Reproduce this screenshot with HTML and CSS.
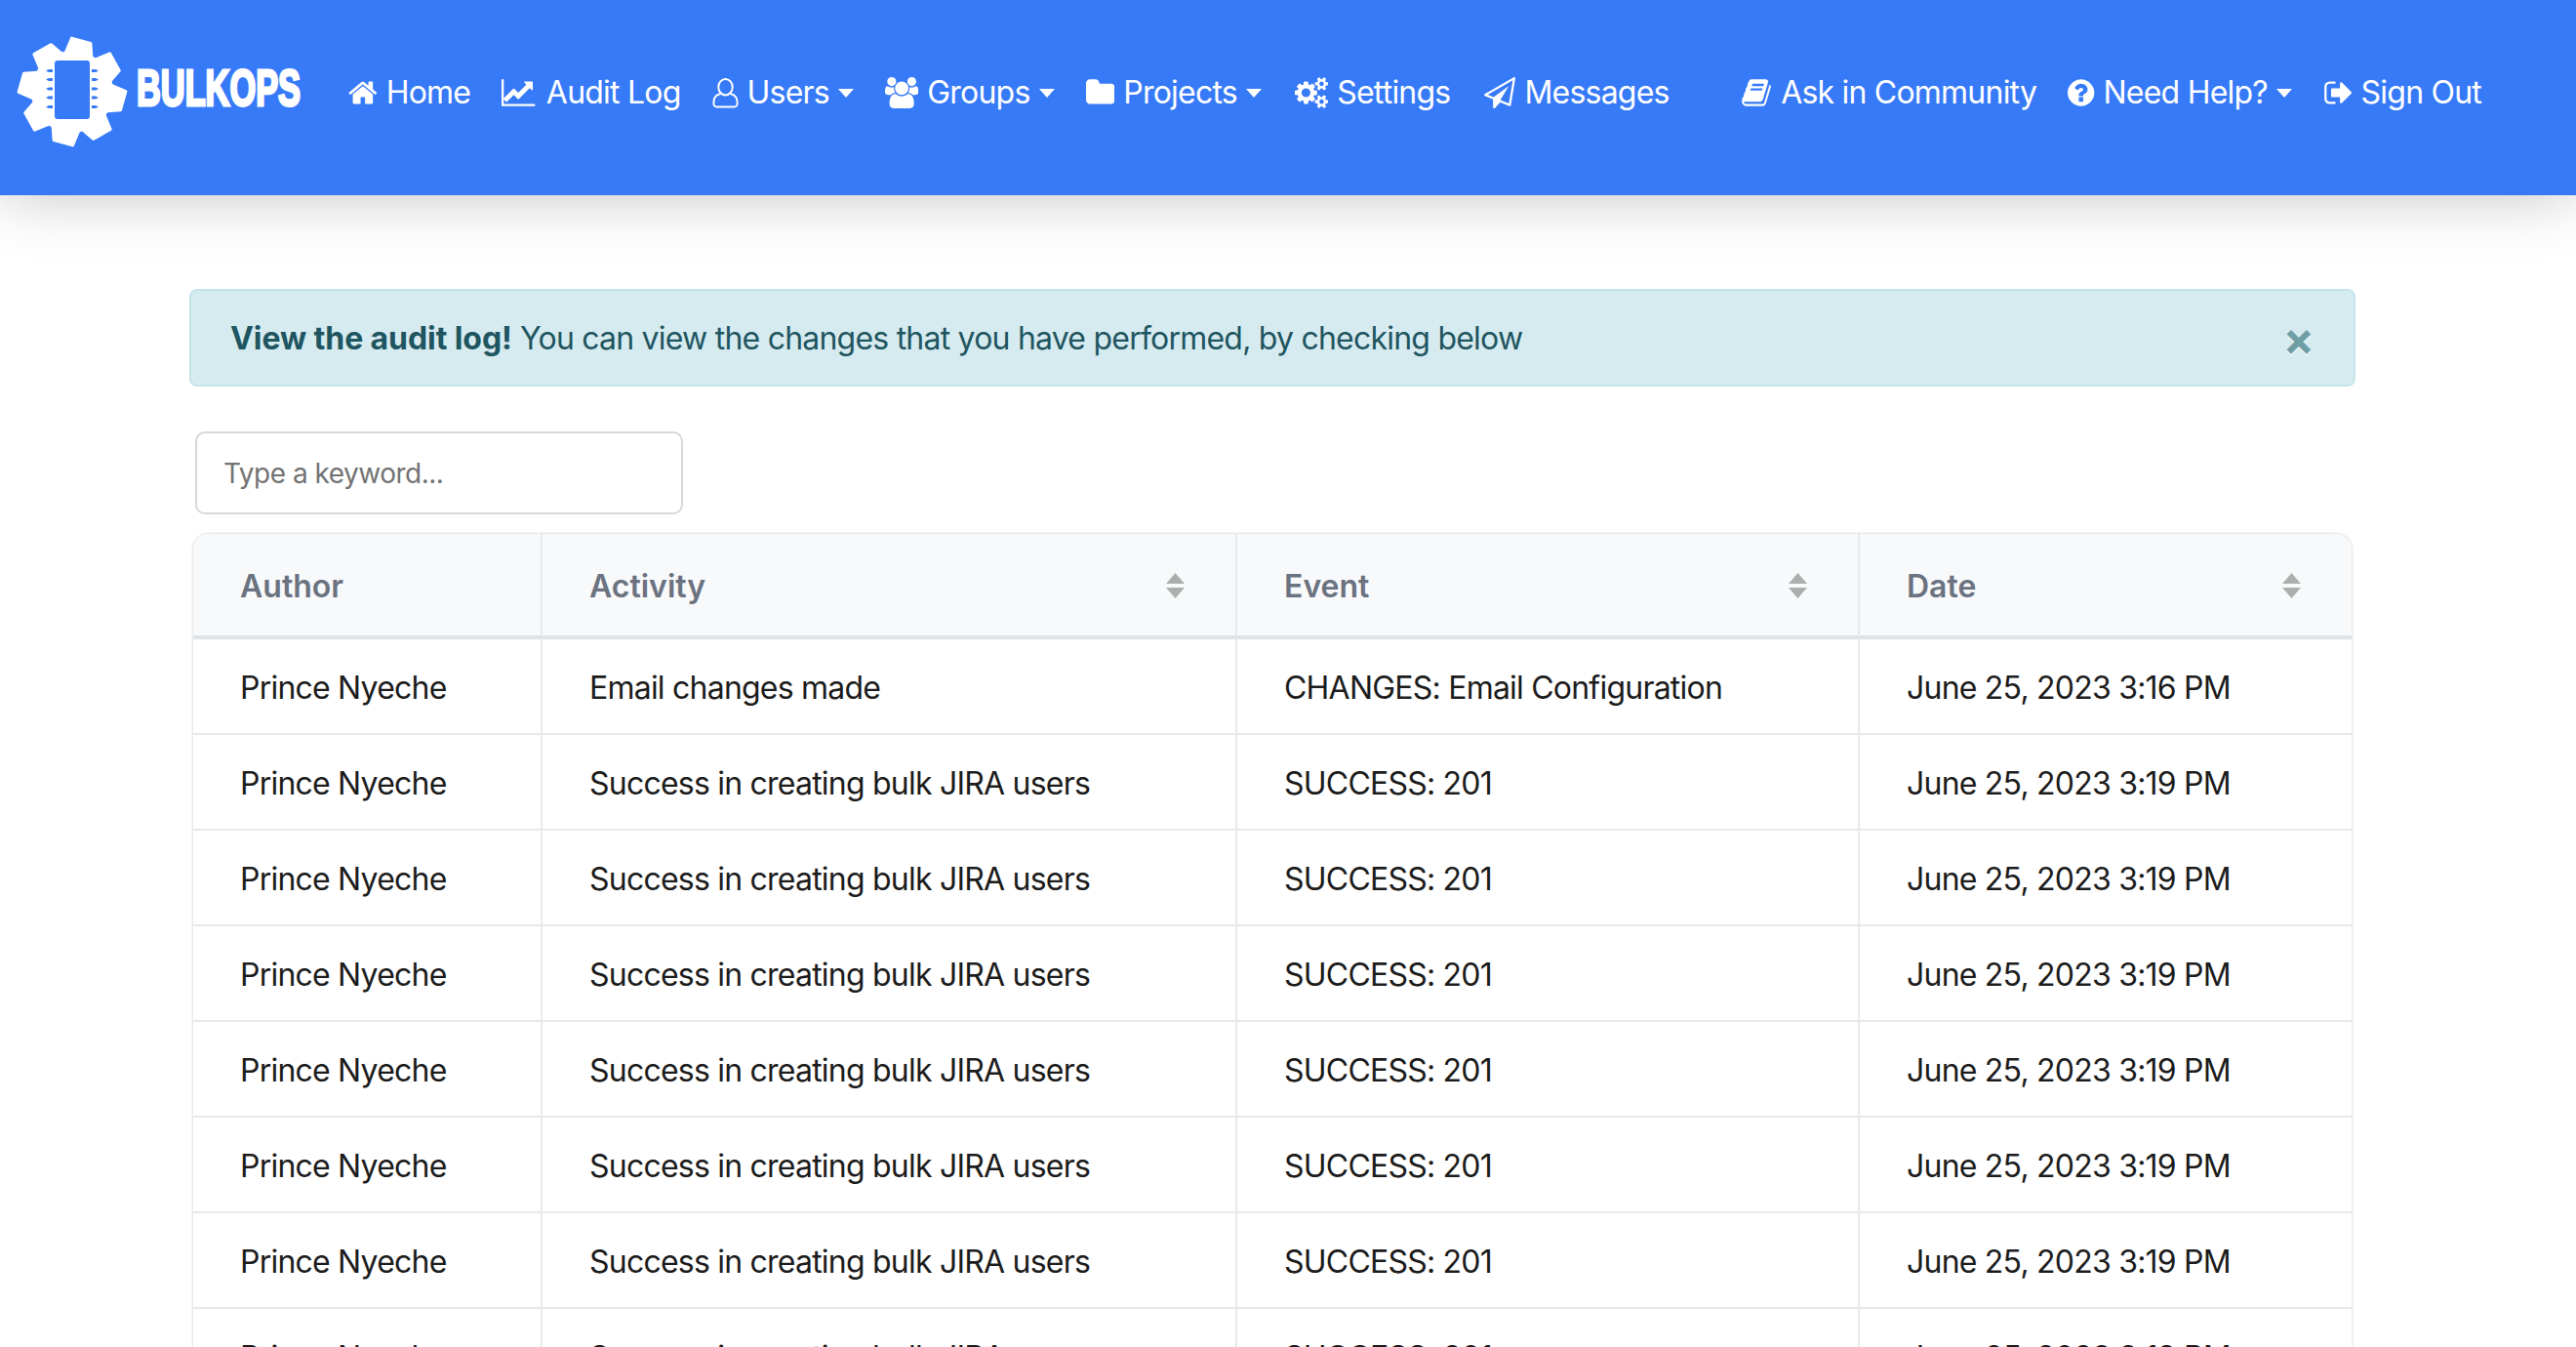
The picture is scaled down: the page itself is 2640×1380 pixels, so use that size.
FILE: index.html
```html
<!DOCTYPE html>
<html lang="en">
<head>
<meta charset="utf-8">
<title>BulkOps - Audit Log</title>
<link rel="stylesheet" href="styles.css">
</head>
<body>
<nav class="navbar">
  <a class="brand" href="#">
    <svg class="logo" viewBox="0 0 325 130" aria-label="BulkOps logo">
      <defs>
        <path id="tooth" d="M-10 -54 L10 -52 L14 -36 L-14 -36 Z" fill="#fff" stroke="#fff" stroke-width="3" stroke-linejoin="round"/>
      </defs>
      <g transform="translate(74 64)">
        <circle r="42" fill="#fff"/>
        <g transform="rotate(10)">
          <use href="#tooth" transform="rotate(0)"/>
          <use href="#tooth" transform="rotate(45)"/>
          <use href="#tooth" transform="rotate(90)"/>
          <use href="#tooth" transform="rotate(135)"/>
          <use href="#tooth" transform="rotate(180)"/>
          <use href="#tooth" transform="rotate(225)"/>
          <use href="#tooth" transform="rotate(270)"/>
          <use href="#tooth" transform="rotate(315)"/>
        </g>
        <rect x="-18" y="-32" width="36" height="60" rx="3" fill="#377af8"/>
        <g fill="#377af8">
          <path d="M-20 -23h-4l-3 1.500 3 1.500h4zM-20 -14h-4l-3 1.500 3 1.500h4zM-20 -4.500h-4l-3 1.500 3 1.500h4zM-20 4.500h-4l-3 1.500 3 1.500h4zM-20 14h-4l-3 1.500 3 1.500h4z"/>
          <path d="M20 -23h4l3 1.500-3 1.500h-4zM20 -14h4l3 1.500-3 1.500h-4zM20 -4.500h4l3 1.500-3 1.500h-4zM20 4.500h4l3 1.500-3 1.500h-4zM20 14h4l3 1.500-3 1.500h-4z"/>
        </g>
      </g>
      <text class="logo-text" x="140" y="78" textLength="168" lengthAdjust="spacingAndGlyphs">BULKOPS</text>
    </svg>
  </a>
  <ul class="nav-group">
    <li><a class="nav-link" href="#"><svg class="ic ic-w1664" viewBox="0 0 1664 1792"><path d="M1408 992v480q0 26-19 45t-45 19h-384v-384h-256v384h-384q-26 0-45-19t-19-45v-480q0-1 .5-3t.5-3l575-474 575 474q1 2 1 6zm223-69l-62 74q-8 9-21 11h-3q-13 0-21-7l-692-577-692 577q-12 8-24 7-13-2-21-11l-62-74q-8-10-7-23.5t11-21.5l719-599q32-26 76-26t76 26l244 204v-195q0-14 9-23t23-9h192q14 0 23 9t9 23v408l219 182q10 8 11 21.5t-7 23.5z"/></svg>Home</a></li>
    <li><a class="nav-link" href="#"><svg class="ic ic-w2048" viewBox="0 0 2048 1792"><path d="M1920 1536v128h-1920v-1536h128v1408h1792zm-128-1248v435q0 21-19.500 29.500t-35.500-7.500l-121-121-633 633q-10 10-23 10t-23-10l-233-233-416 416-192-192 585-585q10-10 23-10t23 10l233 233 464-464-121-121q-16-16-7.500-35.500t29.500-19.500h435q14 0 23 9t9 23z"/></svg>Audit Log</a></li>
    <li><a class="nav-link caret" href="#"><svg class="ic ic-user" viewBox="0 0 28 32"><ellipse cx="14" cy="10" rx="7.500" ry="8.500"/><path d="M9 17C4 18 1.500 21 1.500 26v2a3 3 0 0 0 3 3h19a3 3 0 0 0 3-3v-2C26.500 21 24 18 19 17"/></svg>Users</a></li>
    <li><a class="nav-link caret" href="#"><svg class="ic ic-w1920" viewBox="-64 0 1920 1792"><path d="M529 896q-162 5-265 128h-134q-82 0-138-40.500t-56-118.500q0-353 124-353 6 0 43.500 21t97.500 42.500 119 21.500q67 0 133-23-5 37-5 66 0 139 81 256zm1071 637q0 120-73 189.500t-194 69.500h-874q-121 0-194-69.500t-73-189.500q0-53 3.500-103.500t14-109 26.500-108.500 43-97.500 62-81 85.500-53.500 111.500-20q10 0 43 21.500t73 48 107 48 135 21.500 135-21.500 107-48 73-48 43-21.500q61 0 111.500 20t85.500 53.500 62 81 43 97.500 26.500 108.500 14 109 3.500 103.500zm-1024-1277q0 106-75 181t-181 75-181-75-75-181 75-181 181-75 181 75 75 181zm704 384q0 159-112.500 271.500t-271.500 112.500-271.500-112.500-112.500-271.500 112.500-271.500 271.500-112.500 271.500 112.500 112.500 271.500zm576 225q0 78-56 118.500t-138 40.500h-134q-103-123-265-128 81-117 81-256 0-29-5-66 66 23 133 23 59 0 119-21.500t97.500-42.500 43.500-21q124 0 124 353zm-128-609q0 106-75 181t-181 75-181-75-75-181 75-181 181-75 181 75 75 181z"/></svg>Groups</a></li>
    <li><a class="nav-link caret" href="#"><svg class="ic ic-w1664" viewBox="0 0 1664 1792"><path d="M1664 608v704q0 92-66 158t-158 66h-1216q-92 0-158-66t-66-158v-960q0-92 66-158t158-66h320q92 0 158 66t66 158v32h672q92 0 158 66t66 158z"/></svg>Projects</a></li>
    <li><a class="nav-link nav-settings" href="#"><svg class="ic ic-w1920" viewBox="0 0 1920 1792"><path d="M896 896q0-106-75-181t-181-75-181 75-75 181 75 181 181 75 181-75 75-181zm768 512q0-52-38-90t-90-38-90 38-38 90q0 53 37.500 90.500t90.500 37.500 90.500-37.500 37.500-90.500zm0-1024q0-52-38-90t-90-38-90 38-38 90q0 53 37.500 90.500t90.500 37.500 90.500-37.500 37.500-90.500zm-384 421v185q0 10-7 19.500t-16 10.500l-155 24q-11 35-32 76 34 48 90 115 7 11 7 20 0 12-7 19-23 30-82.500 89.500t-78.500 59.500q-11 0-21-7l-115-90q-37 19-77 31-11 108-23 155-7 24-30 24h-186q-11 0-20-7.500t-10-17.500l-23-153q-34-10-75-31l-118 89q-7 7-20 7-11 0-21-8-144-133-144-160 0-9 7-19 10-14 41-53t47-61q-23-44-35-82l-152-24q-10-1-17-9.500t-7-19.500v-185q0-10 7-19.500t16-10.500l155-24q11-35 32-76-34-48-90-115-7-11-7-20 0-12 7-20 22-30 82-89t79-59q11 0 21 7l115 90q34-18 77-32 11-108 23-154 7-24 30-24h186q11 0 20 7.500t10 17.500l23 153q34 10 75 31l118-89q8-7 20-7 11 0 21 8 144 133 144 160 0 8-7 19-12 16-42 54t-45 60q23 48 34 82l152 23q10 2 17 10.500t7 19.500zm640 533v140q0 16-149 31-12 27-30 52 51 113 51 138 0 4-4 7-122 71-124 71-8 0-46-47t-52-68q-20 2-30 2t-30-2q-14 21-52 68t-46 47q-2 0-124-71-4-3-4-7 0-25 51-138-18-25-30-52-149-15-149-31v-140q0-16 149-31 13-29 30-52-51-113-51-138 0-4 4-7 4-2 35-20t59-34 30-16q8 0 46 46.500t52 67.500q20-2 30-2t30 2q51-71 92-112l6-2q4 0 124 70 4 3 4 7 0 25-51 138 17 23 30 52 149 15 149 31zm0-1024v140q0 16-149 31-12 27-30 52 51 113 51 138 0 4-4 7-122 71-124 71-8 0-46-47t-52-68q-20 2-30 2t-30-2q-14 21-52 68t-46 47q-2 0-124-71-4-3-4-7 0-25 51-138-18-25-30-52-149-15-149-31v-140q0-16 149-31 13-29 30-52-51-113-51-138 0-4 4-7 4-2 35-20t59-34 30-16q8 0 46 46.500t52 67.500q20-2 30-2t30 2q51-71 92-112l6-2q4 0 124 70 4 3 4 7 0 25-51 138 17 23 30 52 149 15 149 31z"/></svg>Settings</a></li>
    <li><a class="nav-link nav-messages" href="#"><svg class="ic ic-w1792" viewBox="0 0 1792 1792"><path d="M1764 11q33 24 27 64l-256 1536q-5 29-32 45-14 8-31 8-11 0-24-5l-527-215-298 327q-18 21-47 21-14 0-23-4-19-7-30-23.500t-11-36.500v-452l-472-193q-37-14-40-55-3-39 32-59l1664-960q35-21 68 2zm-342 1499l221-1323-1434 827 336 137 863-639-478 797z"/></svg>Messages</a></li>
  </ul>
  <ul class="nav-group nav-right">
    <li><a class="nav-link" href="#"><svg class="ic ic-w1792" viewBox="0 0 1792 1792"><path d="M1703 478q40 57 18 129l-275 906q-19 64-76.500 107.500t-122.500 43.500h-923q-77 0-148.500-53.500t-99.500-131.500q-24-67-2-127 0-4 3-27t4-37q1-8-3-21.500t-3-19.500q2-11 8-21t16.500-23.500 16.500-23.500q23-38 45-91.500t30-91.500q3-10 .5-30t-.5-28q3-11 17-28t17-23q21-36 42-92t25-90q1-9-2.500-32t.5-28q4-13 22-30.500t22-22.500q19-26 42.500-84.500t27.500-96.500q1-8-3-25.500t-2-26.500q2-8 9-18t18-23 17-21q8-12 16.500-30.500t15-35 16-36 19.500-32 26.500-23.500 36-11.500 47.500 5.500l-1 3q38-9 51-9h761q74 0 114 56t18 130l-274 906q-36 119-71.500 153.500t-128.500 34.500h-869q-27 0-38 15-11 16-1 43 24 70 144 70h923q29 0 56-15.500t35-41.500l300-987q7-22 5-57 38 15 59 43zm-1064 2q-4 13 2 22.500t20 9.500h608q13 0 25.500-9.500t16.500-22.500l21-64q4-13-2-22.500t-20-9.500h-608q-13 0-25.500 9.500t-16.500 22.500zm-83 256q-4 13 2 22.500t20 9.500h608q13 0 25.500-9.500t16.500-22.500l21-64q4-13-2-22.500t-20-9.500h-608q-13 0-25.500 9.500t-16.500 22.500z"/></svg>Ask in Community</a></li>
    <li><a class="nav-link caret" href="#"><svg class="ic ic-w1536" viewBox="0 0 1536 1792"><path d="M896 1376v-192q0-14-9-23t-23-9h-192q-14 0-23 9t-9 23v192q0 14 9 23t23 9h192q14 0 23-9t9-23zm256-672q0-88-55.500-163t-138.500-116-170-41q-243 0-371 213-15 24 8 42l132 100q7 6 19 6 16 0 25-12 53-68 86-92 34-24 86-24 48 0 85.500 26t37.500 59q0 38-20 61t-68 45q-63 28-115.500 86.500t-52.500 125.500v36q0 14 9 23t23 9h192q14 0 23-9t9-23q0-19 21.500-49.500t54.500-49.500q32-18 49-28.500t46-35 44.500-48 28-60.500 12.500-81zm384 192q0 209-103 385.500t-279.500 279.500-385.500 103-385.500-103-279.500-279.500-103-385.500 103-385.500 279.500-279.500 385.500-103 385.500 103 279.500 279.500 103 385.500z"/></svg>Need Help?</a></li>
    <li><a class="nav-link" href="#"><svg class="ic ic-w1664" viewBox="0 0 1664 1792"><path d="M704 1440q0 4 1 20t.5 26.500-3 23.500-10 19.500-20.500 6.500h-320q-119 0-203.500-84.500t-84.500-203.500v-704q0-119 84.500-203.500t203.500-84.500h320q13 0 22.500 9.500t9.500 22.500q0 4 1 20t.5 26.500-3 23.500-10 19.500-20.500 6.500h-320q-66 0-113 47t-47 113v704q0 66 47 113t113 47h312l11.500 1 11.500 3 8 5.500 7 9 2 13.500zm928-544q0 26-19 45l-544 544q-19 19-45 19t-45-19-19-45v-288h-448q-26 0-45-19t-19-45v-384q0-26 19-45t45-19h448v-288q0-26 19-45t45-19 45 19l544 544q19 19 19 45z"/></svg>Sign Out</a></li>
  </ul>
</nav>

<main class="content">
  <div class="alert">
    <p class="alert-text"><strong>View the audit log!</strong> You can view the changes that you have performed, by checking below</p>
    <button class="close" type="button">×</button>
  </div>

  <input class="keyword" type="text" placeholder="Type a keyword...">

  <div class="table-card">
    <table class="log">
      <colgroup>
        <col class="col-author"><col class="col-activity"><col class="col-event"><col class="col-date">
      </colgroup>
      <thead>
        <tr>
          <th>Author</th>
          <th><div class="th-sort">Activity<svg class="sort" viewBox="0 0 19 26"><path d="M9.500 0L19 11H0zM0 15h19L9.500 26z"/></svg></div></th>
          <th><div class="th-sort">Event<svg class="sort" viewBox="0 0 19 26"><path d="M9.500 0L19 11H0zM0 15h19L9.500 26z"/></svg></div></th>
          <th><div class="th-sort">Date<svg class="sort" viewBox="0 0 19 26"><path d="M9.500 0L19 11H0zM0 15h19L9.500 26z"/></svg></div></th>
        </tr>
      </thead>
      <tbody>
        <tr><td>Prince Nyeche</td><td>Email changes made</td><td>CHANGES: Email Configuration</td><td>June 25, 2023 3:16 PM</td></tr>
        <tr><td>Prince Nyeche</td><td>Success in creating bulk JIRA users</td><td>SUCCESS: 201</td><td>June 25, 2023 3:19 PM</td></tr>
        <tr><td>Prince Nyeche</td><td>Success in creating bulk JIRA users</td><td>SUCCESS: 201</td><td>June 25, 2023 3:19 PM</td></tr>
        <tr><td>Prince Nyeche</td><td>Success in creating bulk JIRA users</td><td>SUCCESS: 201</td><td>June 25, 2023 3:19 PM</td></tr>
        <tr><td>Prince Nyeche</td><td>Success in creating bulk JIRA users</td><td>SUCCESS: 201</td><td>June 25, 2023 3:19 PM</td></tr>
        <tr><td>Prince Nyeche</td><td>Success in creating bulk JIRA users</td><td>SUCCESS: 201</td><td>June 25, 2023 3:19 PM</td></tr>
        <tr><td>Prince Nyeche</td><td>Success in creating bulk JIRA users</td><td>SUCCESS: 201</td><td>June 25, 2023 3:19 PM</td></tr>
        <tr><td>Prince Nyeche</td><td>Success in creating bulk JIRA users</td><td>SUCCESS: 201</td><td>June 25, 2023 3:19 PM</td></tr>
      </tbody>
    </table>
  </div>
</main>
</body>
</html>
```
FILE: styles.css
```css
* { box-sizing: border-box; }
html, body { height: 100%; overflow: hidden; }
body {
  margin: 0;
  background: #fff;
  color: #212529;
  font-family: Inter, "Liberation Sans", sans-serif;
  font-size: 32px;
  line-height: 48px;
  letter-spacing: -.78px;
}
.navbar {
  height: 200px;
  padding: 0 81px 10px 0;
  background: #377af8;
  display: flex;
  align-items: center;
  box-shadow: 0 0 60px rgba(0, 0, 0, .24);
  position: relative;
}
.brand { display: block; height: 130px; margin-right: 16px; flex: none; }
.logo { display: block; width: 325px; height: 130px; }
.logo-text {
  fill: #fff;
  stroke: #fff;
  stroke-width: 3px;
  font-family: "Liberation Sans", sans-serif;
  font-weight: 700;
  font-size: 52px;
  letter-spacing: 0;
}
.nav-group { list-style: none; display: flex; margin: 0; padding: 0; }
.nav-right { margin-left: auto; }
.nav-link {
  display: flex;
  align-items: center;
  gap: 9px;
  padding: 0 16px;
  color: #fff;
  text-decoration: none;
  white-space: nowrap;
}
.nav-settings { padding-left: 18px; }
.nav-messages { padding-left: 19px; }
.caret::after {
  content: "";
  margin-left: 0;
  border-top: 9px solid #fff;
  border-left: 8px solid transparent;
  border-right: 8px solid transparent;
}
.ic { height: 32px; fill: #fff; flex: none; }
.ic-w1536 { width: 27.4px; }
.ic-w1664 { width: 29.7px; }
.ic-w1792 { width: 32px; }
.ic-w1920 { width: 34.3px; }
.ic-w2048 { width: 36.6px; }
.ic-user { width: 27px; fill: none; stroke: #fff; stroke-width: 2; }

.content { width: 2220px; margin-left: 194px; padding-top: 96px; }
.alert {
  height: 100px;
  padding: 2px 40px 0;
  display: flex;
  align-items: center;
  justify-content: space-between;
  background: #d6ebf0;
  border: 2px solid #c5e4ea;
  border-radius: 8px;
  color: #1f5560;
}
.alert-text { margin: 0; }
.alert-text strong { font-weight: 700; letter-spacing: -.08px; }
.close {
  padding: 0;
  border: 0;
  background: none;
  color: #0c5460;
  opacity: .5;
  font: 700 48px/48px Inter, sans-serif;
  text-shadow: 0 2px 0 #fff;
}
.keyword {
  display: block;
  width: 500px;
  height: 85px;
  margin: 46px 0 20px 6px;
  padding: 0 27px;
  border: 2px solid #d5d8dd;
  border-radius: 10px;
  background: #fff;
  font-family: Inter, sans-serif;
  font-size: 28px;
  letter-spacing: -.5px;
  color: #212529;
  outline: 0;
}
.keyword::placeholder { color: #737373; opacity: 1; }

.table-card {
  width: 2212px;
  margin-left: 4px;
  border-radius: 16px 16px 0 0;
  box-shadow: 0 0 3px rgba(0, 0, 0, .25);
  overflow: hidden;
}
.log { width: 100%; table-layout: fixed; border-collapse: separate; border-spacing: 0; }
.col-author { width: 358px; }
.col-activity { width: 712px; }
.col-event { width: 638px; }
.col-date { width: 504px; }
.log th, .log td { padding: 26px 48px 22px; text-align: left; border-right: 2px solid #e7e9ec; }
.log th:last-child, .log td:last-child { border-right: 0; }
.log th {
  height: 108px;
  background: #f8f9fb;
  border-bottom: 4px solid #dfe2e7;
  color: #6b7280;
  font-weight: 600;
  letter-spacing: 0;
  padding-right: 0;
}
.log td { height: 98px; border-bottom: 2px solid #e7e9ec; color: #1c1c1c; }
.th-sort { display: flex; justify-content: space-between; align-items: center; padding-right: 52px; }
.sort { width: 19px; height: 26px; fill: #adafaf; flex: none; transform: translateY(-1px); }
```
